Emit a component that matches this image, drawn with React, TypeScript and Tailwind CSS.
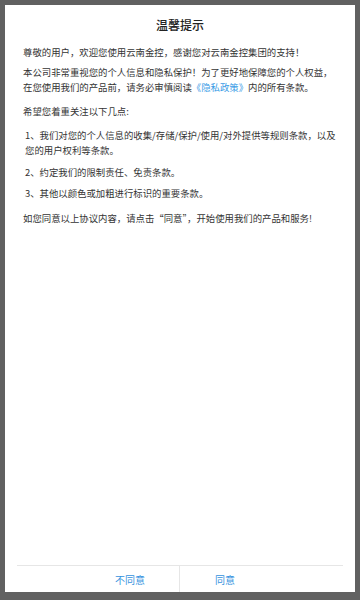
export default function App() {
  return (
    <div className="w-[360px] h-[600px] bg-[#616161] pt-[5px] px-[5px] pb-[8px] flex">
      <div
        className="flex-1 bg-white flex flex-col text-[#333]"
        style={{ fontFamily: '"Noto Sans CJK SC", "Noto Sans", sans-serif' }}
      >
        <h1 className="text-center text-[12px] leading-[16px] font-medium text-[#222] mt-[12px]">温馨提示</h1>

        <div className="px-[18px] text-[9.4px] leading-[15px] mt-[11.5px]">
          <p>尊敬的用户，欢迎您使用云南金控，感谢您对云南金控集团的支持！</p>
          <p className="mt-[5px]">
            本公司非常重视您的个人信息和隐私保护！为了更好地保障您的个人权益，在您使用我们的产品前，请务必审慎阅读
            <span className="text-[#3a9ce6]">《隐私政策》</span>内的所有条款。
          </p>
          <p className="mt-[9px]">希望您着重关注以下几点:</p>
          <p className="mt-[9px] pl-[2px]">1、我们对您的个人信息的收集/存储/保护/使用/对外提供等规则条款，以及您的用户权利等条款。</p>
          <p className="mt-[7px] pl-[2px]">2、约定我们的限制责任、免责条款。</p>
          <p className="mt-[6px] pl-[2px]">3、其他以颜色或加粗进行标识的重要条款。</p>
          <p className="mt-[10px]">如您同意以上协议内容，请点击“同意”，开始使用我们的产品和服务!</p>
        </div>

        <div className="flex-1" />

        <div className="mx-[12px] border-t border-[#e6e6e6] flex h-[27px] text-[10px] text-[#3592de]">
          <button className="flex-1 flex items-center justify-end pr-[34px]">不同意</button>
          <button className="flex-1 flex items-center justify-start pl-[35px] border-l border-[#e6e6e6]">同意</button>
        </div>
      </div>
    </div>
  );
}
